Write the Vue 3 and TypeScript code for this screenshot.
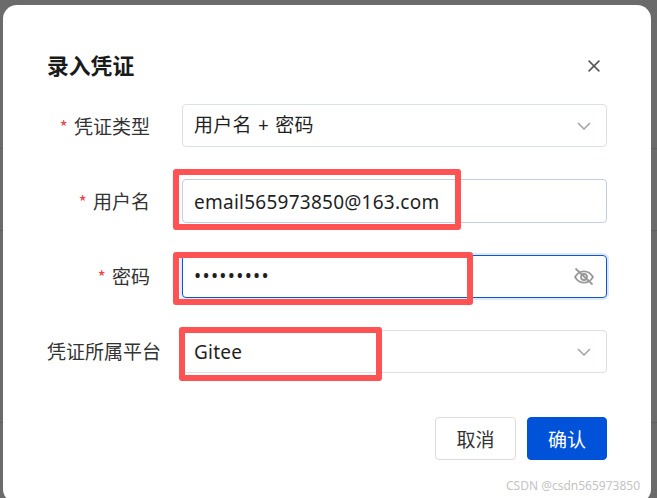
<script setup lang="ts">
import { ref } from 'vue'

interface Row {
  label: string
  required: boolean
  kind: 'select' | 'input' | 'password'
  value: string
}

const rows = ref<Row[]>([
  { label: '凭证类型', required: true, kind: 'select', value: '用户名 + 密码' },
  { label: '用户名', required: true, kind: 'input', value: 'email565973850@163.com' },
  { label: '密码', required: true, kind: 'password', value: '•••••••••' },
  { label: '凭证所属平台', required: false, kind: 'select', value: 'Gitee' },
])
</script>

<template>
  <div class="page">
    <div class="dialog">
      <header class="head">
        <h2 class="title">录入凭证</h2>
        <svg class="close" viewBox="0 0 12 12" width="12" height="12" fill="none" stroke="#555" stroke-width="1.5">
          <path d="M.6.6l10.800 10.800M11.400.6L.6 11.400" />
        </svg>
      </header>

      <form class="form">
        <div v-for="row in rows" :key="row.label" class="row">
          <label class="label" :class="{ long: !row.required }"><span v-if="row.required" class="star">*</span>{{ row.label }}</label>
          <div class="field" :class="row.kind">
            <span class="value">{{ row.value }}</span>
            <svg v-if="row.kind === 'select'" class="chev" viewBox="0 0 14 8" width="14" height="8" fill="none" stroke="#a3a3a3" stroke-width="1.5">
              <path d="M1 1l6 6 6-6" />
            </svg>
            <svg v-if="row.kind === 'password'" class="eye" viewBox="0 0 20 20" width="20" height="20" fill="none" stroke="#999" stroke-width="1.8">
              <path d="M1 11c2.200-3.800 5.200-5.700 9-5.700s6.800 1.900 9 5.700c-2.200 3.800-5.200 5.700-9 5.700S3.200 14.800 1 11z" />
              <circle cx="10" cy="11" r="3" />
              <path d="M1.500 2.500L18.500 18.500" />
            </svg>
          </div>
        </div>
      </form>

      <footer class="foot">
        <button type="button" class="btn">取消</button>
        <button type="button" class="btn primary">确认</button>
      </footer>

      <div class="mark mark-1"></div>
      <div class="mark mark-2"></div>
      <div class="mark mark-3"></div>
    </div>
    <span class="watermark">CSDN @csdn565973850</span>
  </div>
</template>

<style>
html, body { margin: 0; padding: 0; }
</style>

<style scoped>
.page {
  position: relative;
  width: 657px;
  height: 498px;
  overflow: hidden;
  background-color: #6b6b6b;
  background-image:
    linear-gradient(#5e5e5e, #5e5e5e),
    linear-gradient(#5e5e5e, #5e5e5e),
    linear-gradient(#5e5e5e, #5e5e5e);
  background-size: 100% 1px;
  background-repeat: no-repeat;
  background-position: 0 148px, 0 230px, 0 422px;
  padding: 5px 6px 0 3px;
  box-sizing: border-box;
  font-family: "Noto Sans", "Noto Sans CJK SC", sans-serif;
  color: #1f1f1f;
}
.dialog {
  position: relative;
  height: 498px;
  background: #fff;
  border-radius: 14px;
  padding: 0 44px;
  box-sizing: border-box;
}
.head {
  display: flex;
  align-items: center;
  justify-content: space-between;
  height: 99px;
  padding-top: 23px;
  box-sizing: border-box;
}
.title {
  margin: 0;
  font-size: 21.8px;
  font-weight: 700;
  line-height: 1;
  color: #1a1a1a;
}
.close { margin-right: 7px; }
.form {
  display: flex;
  flex-direction: column;
  gap: 32px;
}
.row {
  display: flex;
  align-items: center;
  gap: 21px;
}
.label {
  width: 114px;
  flex: none;
  box-sizing: border-box;
  padding-right: 11px;
  margin-top: 2px;
  text-align: right;
  font-size: 19px;
  line-height: 1;
  color: #333;
  white-space: nowrap;
}
.label.long { padding-right: 0; margin-top: 2px; }
.star {
  font-family: "Noto Sans CJK SC", sans-serif;
  font-size: 18px;
  color: #e5484d;
  margin-right: 6px;
}
.field {
  flex: 1;
  height: 43.33px;
  box-sizing: border-box;
  border: 1px solid #dcdfe4;
  border-radius: 4px;
  display: flex;
  align-items: center;
  justify-content: space-between;
  padding: 0 15px 0 11px;
  font-size: 19px;
  letter-spacing: 0.25px;
  color: #1f1f1f;
}
.field.input { border-color: #c5cde0; }
.field.password {
  border-color: #0b57d0;
  box-shadow: 0 0 0 2px #dfe7fb;
}
.value { white-space: nowrap; }
.row:first-child .value { margin-bottom: 3px; word-spacing: 1px; }
.input .value { margin-top: 2px; }
.password .value { letter-spacing: 1.3px; }
.eye { margin-right: -3px; }
.foot {
  display: flex;
  justify-content: flex-end;
  gap: 11px;
  margin-top: 44px;
}
.btn {
  width: 81px;
  height: 43px;
  box-sizing: border-box;
  border: 1px solid #dcdcdc;
  border-radius: 4px;
  background: #fff;
  font: inherit;
  font-size: 19px;
  color: #333;
  padding: 0;
}
.btn.primary {
  width: 80px;
  background: #0052d9;
  border-color: #0052d9;
  color: #fff;
}
.mark {
  position: absolute;
  border: 6px solid #ff5252;
  border-radius: 3px;
  box-sizing: border-box;
}
.mark-1 { left: 169.500px; top: 164px; width: 288.500px; height: 61px; }
.mark-2 { left: 169.500px; top: 247px; width: 300px; height: 53px; }
.mark-3 { left: 175.700px; top: 322px; width: 203px; height: 54px; }
.watermark {
  position: absolute;
  right: 17px;
  bottom: 6px;
  font-size: 12px;
  line-height: 1;
  color: #c4c4c4;
  white-space: nowrap;
}
</style>
